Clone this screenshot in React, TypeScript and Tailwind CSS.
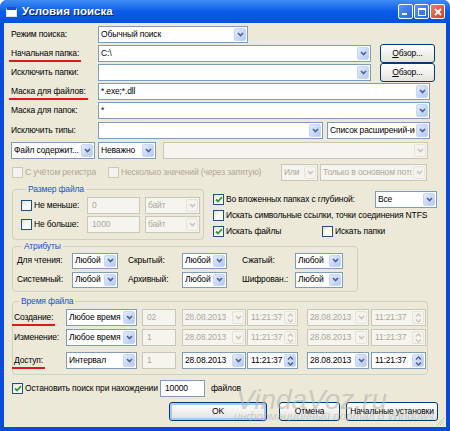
import type { ReactNode } from "react";

const FONT = { fontFamily: '"Liberation Sans", Arial, sans-serif' };

function Chevron({ disabled }: { disabled?: boolean }) {
  return (
    <svg width="7" height="5" viewBox="0 0 7 5">
      <path
        d="M1 1 L3.5 3.5 L6 1"
        fill="none"
        stroke={disabled ? "#c9c7ba" : "#4d6185"}
        strokeWidth="1.6"
      />
    </svg>
  );
}

function DropBtn({ disabled }: { disabled?: boolean }) {
  return (
    <div
      className={
        "m-[1px] grid w-[12px] shrink-0 place-items-center rounded-[2px] border " +
        (disabled
          ? "border-[#e6e4d8] bg-[#f4f3ee]"
          : "border-[#c6d6fa] bg-gradient-to-br from-[#e3ecfe] to-[#b3c8f5]")
      }
    >
      <Chevron disabled={disabled} />
    </div>
  );
}

function SpinBtn({ disabled }: { disabled?: boolean }) {
  const c = disabled ? "#c9c7ba" : "#4d6185";
  return (
    <div
      className={
        "m-[1px] flex w-[12px] shrink-0 flex-col items-center justify-center gap-[2px] rounded-[2px] border " +
        (disabled
          ? "border-[#e6e4d8] bg-[#f4f3ee]"
          : "border-[#c6d6fa] bg-gradient-to-br from-[#e3ecfe] to-[#b3c8f5]")
      }
    >
      <svg width="7" height="4" viewBox="0 0 7 4">
        <path d="M1 3.5 L3.5 1 L6 3.5" fill="none" stroke={c} strokeWidth="1.4" />
      </svg>
      <svg width="7" height="4" viewBox="0 0 7 4">
        <path d="M1 0.5 L3.5 3 L6 0.5" fill="none" stroke={c} strokeWidth="1.4" />
      </svg>
    </div>
  );
}

function Combo({
  w,
  text = "",
  disabled,
  h = "h-[17px]",
}: {
  w: string;
  text?: string;
  disabled?: boolean;
  h?: string;
}) {
  return (
    <div
      className={
        `${w} ${h} flex shrink-0 border ` +
        (disabled ? "border-[#c9c7ba] bg-[#f5f4ef] text-[#aca899]" : "border-[#7f9db9] bg-white text-black")
      }
    >
      <span className="flex-1 self-center overflow-hidden pl-[2px]">{text}</span>
      <DropBtn disabled={disabled} />
    </div>
  );
}

function Spin({ w, text, disabled }: { w: string; text: string; disabled?: boolean }) {
  return (
    <div
      className={
        `${w} flex h-[17px] shrink-0 border ` +
        (disabled ? "border-[#c9c7ba] bg-[#f5f4ef] text-[#aca899]" : "border-[#7f9db9] bg-white text-black")
      }
    >
      <span className="flex-1 self-center overflow-hidden pl-[3px]">{text}</span>
      <SpinBtn disabled={disabled} />
    </div>
  );
}

function Input({ w, text = "", disabled }: { w: string; text?: string; disabled?: boolean }) {
  return (
    <div
      className={
        `${w} flex h-[17px] shrink-0 items-center overflow-hidden border pl-[4px] ` +
        (disabled ? "border-[#c9c7ba] bg-[#f5f4ef] text-[#aca899]" : "border-[#7f9db9] bg-white text-black")
      }
    >
      {text}
    </div>
  );
}

function Check({
  label,
  checked,
  disabled,
  className = "",
}: {
  label: string;
  checked?: boolean;
  disabled?: boolean;
  className?: string;
}) {
  return (
    <div className={"flex shrink-0 items-center gap-[2px] " + className}>
      <div
        className={
          "grid size-[11px] shrink-0 place-items-center border " +
          (disabled
            ? "border-[#cac8bb] bg-[#f3f2ec]"
            : "border-[#1c5180] bg-gradient-to-br from-[#dcdcd7] via-white to-white")
        }
      >
        {checked && (
          <svg width="8" height="7" viewBox="0 0 8 7">
            <path d="M1 3.5 L3 5.5 L7 1.2" fill="none" stroke="#21a121" strokeWidth="1.8" />
          </svg>
        )}
      </div>
      <span className={disabled ? "text-[#aca899]" : "text-black"}>{label}</span>
    </div>
  );
}

function Btn({ w, children, isDefault }: { w: string; children: ReactNode; isDefault?: boolean }) {
  return (
    <div
      className={
        `${w} grid h-[19px] shrink-0 place-items-center rounded-[3px] border border-[#003c74] bg-gradient-to-b from-white to-[#e3e2dc] ` +
        (isDefault ? "shadow-[inset_0_0_0_2px_#a9c6f5]" : "")
      }
    >
      <span>{children}</span>
    </div>
  );
}

function Marked({ children }: { children: ReactNode }) {
  return <span className="-mx-[2px] border-b-2 border-[#e01818] px-[2px] pb-[2px]">{children}</span>;
}

function Group({
  title,
  className,
  children,
}: {
  title: string;
  className: string;
  children: ReactNode;
}) {
  return (
    <fieldset className={"shrink-0 rounded-[4px] border border-[#d0d0bf] " + className}>
      <legend className="ml-[5px] px-[2px] leading-[11px] text-[#1750d8]">{title}</legend>
      {children}
    </fieldset>
  );
}

function TimeRow({
  label,
  mode,
  num,
  on,
  className,
}: {
  label: ReactNode;
  mode: string;
  num: string;
  on?: boolean;
  className: string;
}) {
  return (
    <div className={"flex h-[17px] items-center " + className}>
      <span className="w-[52px] shrink-0">{label}</span>
      <Combo w="w-[71px]" text={mode} />
      <Input w="ml-[5px] w-[34px]" text={num} disabled />
      <Combo w="ml-[6px] w-[64px]" text="28.08.2013" disabled={!on} />
      <Spin w="ml-[1px] w-[51px]" text="11:21:37" disabled={!on} />
      <Combo w="ml-[9px] w-[62px]" text="28.08.2013" disabled={!on} />
      <Spin w="ml-[2px] w-[55px]" text="11:21:37" disabled={!on} />
    </div>
  );
}

function AttrPair({ label, lw, cw }: { label: string; lw: string; cw: string }) {
  return (
    <>
      <span className={lw + " shrink-0"}>{label}</span>
      <Combo w={cw} h="h-[16px]" text="Любой" />
    </>
  );
}

export default function App() {
  return (
    <div
      style={FONT}
      className="relative flex h-[431px] w-[450px] flex-col overflow-hidden whitespace-nowrap rounded-t-[7px] bg-[#0a4ad8] text-[8.5px] tracking-[-0.15px] text-black"
    >
      {/* title bar */}
      <div className="flex h-[23px] shrink-0 items-center bg-gradient-to-b from-[#3f8cf3] via-[#0a5ce9] to-[#0651dc] pl-[6px] pr-[5px]">
        <div className="h-[10px] w-[11px] border border-[#d8e4f8] border-t-[3px] border-t-[#1c4fc7] bg-white" />
        <span className="ml-[5px] text-[11.5px] font-bold tracking-normal text-white [text-shadow:1px_1px_0_#0a1e6e]">
          Условия поиска
        </span>
        <div className="ml-auto flex gap-[1px]">
          <div className="grid size-[15px] place-items-end justify-items-start rounded-[2px] border border-white bg-gradient-to-br from-[#5a93f5] to-[#2663e0] p-[3px]">
            <div className="h-[2px] w-[5px] bg-white" />
          </div>
          <div className="grid size-[15px] place-items-center rounded-[2px] border border-white bg-gradient-to-br from-[#5a93f5] to-[#2663e0]">
            <div className="size-[8px] border border-t-2 border-white" />
          </div>
          <div className="grid size-[15px] place-items-center rounded-[2px] border border-white bg-gradient-to-br from-[#e8806a] to-[#d33c17]">
            <svg width="8" height="8" viewBox="0 0 8 8">
              <path d="M1 1 L7 7 M7 1 L1 7" stroke="white" strokeWidth="1.8" />
            </svg>
          </div>
        </div>
      </div>

      {/* client area */}
      <div className="relative mx-[4px] mb-[4px] flex flex-1 flex-col bg-[#ece9d8] pl-[7px]">
        <div className="mt-[3px] flex h-[17px] items-center">
          <span className="w-[87px] shrink-0">Режим поиска:</span>
          <Combo w="w-[150px]" text="Обычный поиск" />
        </div>
        <div className="mt-[2px] flex h-[17px] items-center">
          <span className="w-[87px] shrink-0">
            <Marked>Начальная папка:</Marked>
          </span>
          <Combo w="w-[273px]" text="C:\" />
          <Btn w="ml-[9px] w-[55px]">
            <u>О</u>бзор...
          </Btn>
        </div>
        <div className="mt-[2px] flex h-[17px] items-center">
          <span className="w-[87px] shrink-0">Исключить папки:</span>
          <Combo w="w-[273px]" />
          <Btn w="ml-[9px] w-[55px]">
            <u>О</u>бзор...
          </Btn>
        </div>
        <div className="mt-[2px] flex h-[17px] items-center">
          <span className="w-[87px] shrink-0">
            <Marked>Маска для файлов:</Marked>
          </span>
          <Combo w="w-[332px]" text="*.exe;*.dll" />
        </div>
        <div className="mt-[2px] flex h-[17px] items-center">
          <span className="w-[87px] shrink-0">Маска для папок:</span>
          <Combo w="w-[332px]" text="*" />
        </div>
        <div className="mt-[3px] flex h-[17px] items-center">
          <span className="w-[87px] shrink-0">Исключить типы:</span>
          <Combo w="w-[225px]" />
          <Combo w="ml-[4px] w-[103px]" text="Список расширений-исключений" />
        </div>
        <div className="mt-[3px] flex h-[17px] items-center">
          <Combo w="w-[84px]" text="Файл содержит..." />
          <Combo w="ml-[3px] w-[58px]" text="Неважно" />
          <Combo w="ml-[7px] w-[265px]" disabled />
        </div>
        <div className="mt-[5px] flex h-[17px] items-center">
          <Check className="ml-[1px] w-[96px]" label="С учётом регистра" disabled />
          <Check className="w-[173px]" label="Несколько значений (через запятую)" disabled />
          <Combo w="w-[37px]" text="Или" disabled />
          <Combo w="ml-[2px] w-[107px]" text="Только в основном потоке" disabled />
        </div>

        {/* size + flags */}
        <div className="mt-[3px] flex">
          <Group title="Размер файла" className="ml-[1px] h-[56px] w-[192px] pl-[8px] pt-[2px]">
            <div className="flex h-[17px] items-center">
              <Check className="w-[66px]" label="Не меньше:" />
              <Input w="w-[53px]" text="0" disabled />
              <Combo w="ml-[5px] w-[55px]" text="байт" disabled />
            </div>
            <div className="mt-[2px] flex h-[17px] items-center">
              <Check className="w-[66px]" label="Не больше:" />
              <Input w="w-[53px]" text="1000" disabled />
              <Combo w="ml-[5px] w-[55px]" text="байт" disabled />
            </div>
          </Group>
          <div className="ml-[9px] flex flex-col pt-[7px]">
            <div className="flex h-[17px] items-center">
              <Check className="w-[162px]" label="Во вложенных папках с глубиной:" checked />
              <Combo w="w-[62px]" text="Все" />
            </div>
            <Check className="h-[15px]" label="Искать символьные ссылки, точки соединения NTFS" />
            <div className="flex h-[16px] items-center">
              <Check className="w-[109px]" label="Искать файлы" checked />
              <Check label="Искать папки" />
            </div>
          </div>
        </div>

        <Group title="Атрибуты" className="ml-[1px] mt-[1px] h-[51px] w-[346px] pl-[4px]">
          <div className="flex h-[17px] items-center">
            <AttrPair label="Для чтения:" lw="w-[55px]" cw="w-[46px]" />
            <span className="w-[10px]" />
            <AttrPair label="Скрытый:" lw="w-[54px]" cw="w-[45px]" />
            <span className="w-[15px]" />
            <AttrPair label="Сжатый:" lw="w-[53px]" cw="w-[48px]" />
          </div>
          <div className="mt-[2px] flex h-[17px] items-center">
            <AttrPair label="Системный:" lw="w-[55px]" cw="w-[46px]" />
            <span className="w-[10px]" />
            <AttrPair label="Архивный:" lw="w-[54px]" cw="w-[45px]" />
            <span className="w-[15px]" />
            <AttrPair label="Шифрован.:" lw="w-[53px]" cw="w-[48px]" />
          </div>
        </Group>

        <Group title="Время файла" className="ml-[1px] mt-[4px] h-[79px] w-[416px] pl-[1px]">
          <TimeRow className="mt-[2px]" label={<Marked>Создание:</Marked>} mode="Любое время" num="02" />
          <TimeRow className="mt-[3px]" label="Изменение:" mode="Любое время" num="1" />
          <TimeRow className="mt-[6px]" label={<Marked>Доступ:</Marked>} mode="Интервал" num="1" on />
        </Group>

        <div className="mt-[5px] flex h-[17px] items-center">
          <Check className="ml-[1px] w-[148px]" label="Остановить поиск при нахождении" checked />
          <Input w="w-[45px]" text="10000" />
          <span className="ml-[6px]">файлов</span>
        </div>

        <div className="mt-[5px] flex items-center justify-end pr-[8px]">
          <Btn w="w-[98px]" isDefault>
            OK
          </Btn>
          <Btn w="ml-[12px] w-[61px]">Отмена</Btn>
          <Btn w="ml-[6px] w-[92px]">Начальные установки</Btn>
        </div>

        {/* watermark overlay */}
        <div className="pointer-events-none absolute bottom-[4px] right-[12px] flex flex-col items-end italic tracking-normal text-[#b4b4ac]/60">
          <span className="-mb-[5px] mr-[47px] text-[28px] leading-[28px]">VindaVoz.ru</span>
          <span className="text-[11.5px] leading-[14px]">информационный портал о Windows</span>
        </div>

        {/* resize grip */}
        <svg className="absolute bottom-[1px] right-[1px]" width="10" height="10" viewBox="0 0 10 10">
          <path d="M9 2 L2 9 M9 5 L5 9 M9 8 L8 9" stroke="#c5c2b2" strokeWidth="1" />
        </svg>
      </div>
    </div>
  );
}
